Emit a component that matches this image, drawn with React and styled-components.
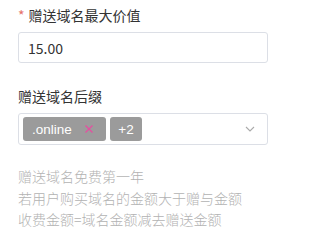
import React from 'react'
import styled, { createGlobalStyle } from 'styled-components'

const GlobalStyle = createGlobalStyle`
  body {
    margin: 0;
    background: #fff;
    font-family: "Microsoft YaHei", "Noto Sans CJK SC", "Noto Sans", sans-serif;
  }
`

const Form = styled.div`
  width: 250px;
  padding: 5px 0 0 18px;
`

const Item = styled.div`
  margin-bottom: ${(p) => p.gap || 23}px;
`

const Label = styled.div`
  font-size: 14px;
  line-height: 20px;
  color: #333;
  margin-bottom: 7px;
`

const Star = styled.span`
  color: #e5706a;
  margin-right: 4px;
`

const Input = styled.input`
  box-sizing: border-box;
  width: 100%;
  height: 31px;
  border: 1px solid #dcdfe6;
  border-radius: 3px;
  padding: 0 9px;
  font-size: 14px;
  color: #333;
  font-family: inherit;
  outline: none;
`

const Select = styled.div`
  box-sizing: border-box;
  height: 32px;
  border: 1px solid #dcdfe6;
  border-radius: 3px;
  display: flex;
  align-items: center;
  padding: 0 12px 0 4px;
  gap: 4px;
`

const Tag = styled.span`
  display: inline-flex;
  align-items: center;
  justify-content: ${(p) => (p.center ? 'center' : 'flex-start')};
  height: 24px;
  box-sizing: border-box;
  padding: 0 ${(p) => (p.center ? 0 : 13)}px 0 ${(p) => (p.center ? 0 : 9)}px;
  background: #9b9b9b;
  color: #fff;
  border-radius: 3px;
  font-family: "Liberation Sans", Arial, sans-serif;
  font-size: 13.5px;
  width: ${(p) => p.w}px;
`

const Close = styled.span`
  margin-left: auto;
  color: #e54fa0;
  display: flex;
`

const Chevron = styled.span`
  margin-left: auto;
  display: flex;
  color: #aaa;
`

const Help = styled.div`
  font-size: 14px;
  font-weight: 300;
  line-height: 21.5px;
  color: #b2b2b2;
`

export default function App() {
  return (
    <>
      <GlobalStyle />
      <Form>
        <Item>
          <Label>
            <Star>*</Star>赠送域名最大价值
          </Label>
          <Input defaultValue="15.00" />
        </Item>
        <Item gap={21}>
          <Label>赠送域名后缀</Label>
          <Select>
            <Tag w={83}>
              .online
              <Close>
                <svg width="8" height="8" viewBox="0 0 8 8">
                  <path d="M0.5 0.5L7.5 7.5M7.5 0.5L0.5 7.5" stroke="currentColor" strokeWidth="1.3" />
                </svg>
              </Close>
            </Tag>
            <Tag w={32} center>+2</Tag>
            <Chevron>
              <svg width="10" height="6" viewBox="0 0 10 6">
                <path d="M1 1L5 5L9 1" stroke="currentColor" strokeWidth="1.1" fill="none" />
              </svg>
            </Chevron>
          </Select>
        </Item>
        <Help>
          <div>赠送域名免费第一年</div>
          <div>若用户购买域名的金额大于赠与金额</div>
          <div>收费金额=域名金额减去赠送金额</div>
        </Help>
      </Form>
    </>
  )
}
